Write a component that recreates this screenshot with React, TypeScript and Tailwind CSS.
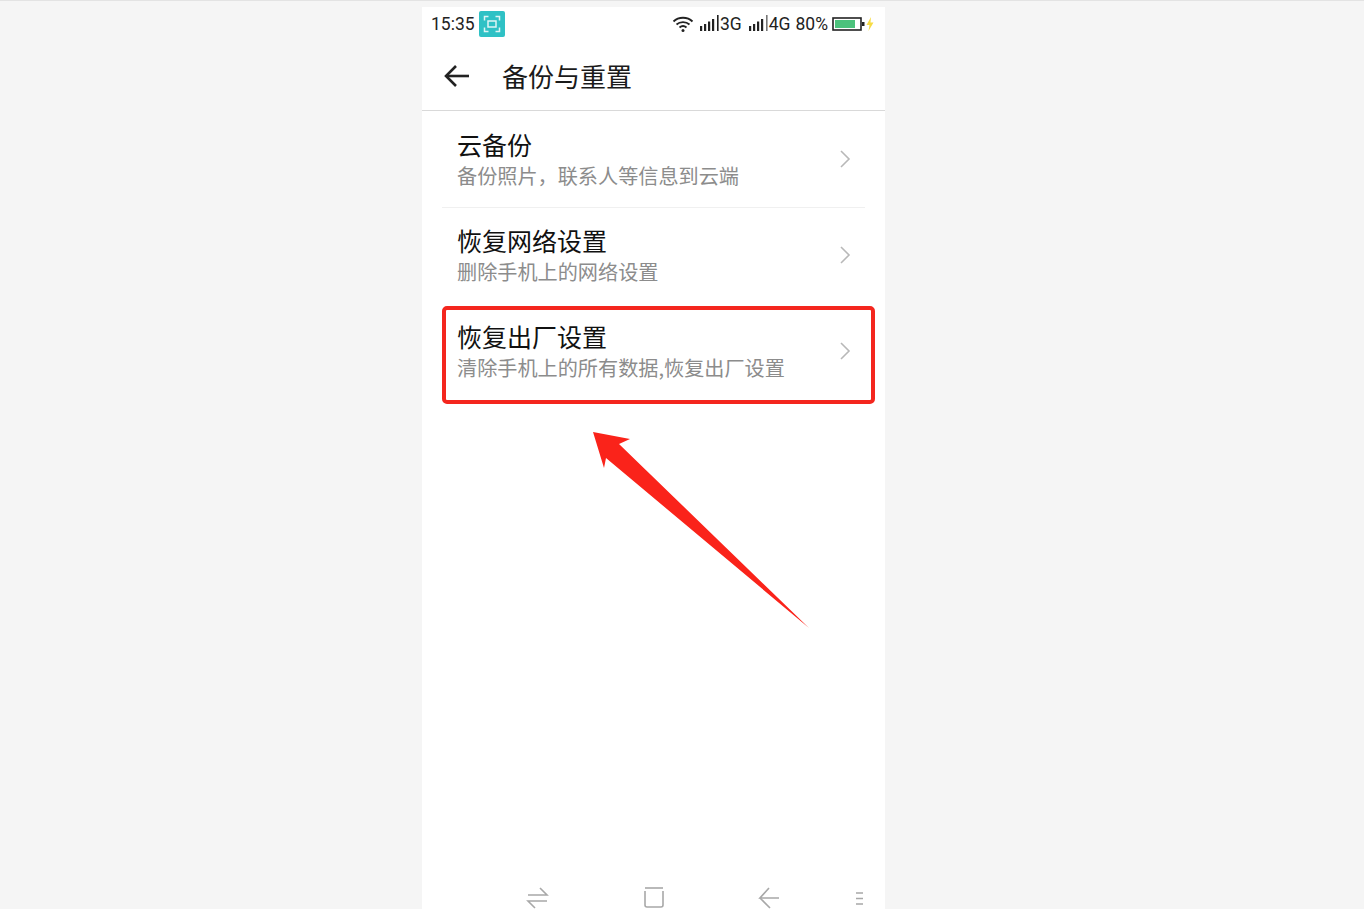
import React from 'react';

const cjk = { fontFamily: '"Noto Sans CJK SC", "Noto Sans", sans-serif' };

interface RowItem {
  title: string;
  desc: string;
  divider?: boolean;
  marked?: boolean;
}

const rows: RowItem[] = [
  { title: '云备份', desc: '备份照片，联系人等信息到云端', divider: true },
  { title: '恢复网络设置', desc: '删除手机上的网络设置' },
  { title: '恢复出厂设置', desc: '清除手机上的所有数据,恢复出厂设置', marked: true },
];

function SignalBars({ lastColor }: { lastColor: string }) {
  return (
    <svg width="20" height="18" viewBox="0 0 20 18" className="shrink-0">
      <rect x="0" y="11" width="2.2" height="5" fill="#222" />
      <rect x="4" y="9" width="2.2" height="7" fill="#222" />
      <rect x="8" y="6.5" width="2.2" height="9.5" fill="#222" />
      <rect x="12" y="4" width="2.2" height="12" fill="#222" />
      <rect x="17" y="0" width="1.6" height="16" fill={lastColor} />
    </svg>
  );
}

function StatusBar() {
  return (
    <div className="flex h-[34px] items-center pl-[9px] pr-[11px]">
      <span className="mt-[2px] w-[44px] text-[17.5px] leading-none text-[#222]" style={{ fontFamily: 'Roboto, sans-serif' }}>15:35</span>
      <div className="ml-[4px] flex h-[26px] w-[26px] items-center justify-center rounded-[2px] bg-[#2fc1c5]">
        <svg width="18" height="18" viewBox="0 0 18 18" fill="none" stroke="#dff5f5" strokeWidth="1.5">
          <path d="M1.5 5.5V1.5H5.5M12.5 1.5H16.5V5.5M16.5 12.5V16.5H12.5M5.5 16.5H1.5V12.5" />
          <rect x="5" y="6" width="8" height="6" />
        </svg>
      </div>
      <div className="ml-auto flex items-center text-[17.5px] leading-none text-[#222]" style={{ fontFamily: 'Roboto, sans-serif' }}>
        <svg width="22" height="18" viewBox="0 0 22 18" fill="none" stroke="#222" strokeWidth="1.8" className="mr-[6px] shrink-0">
          <path d="M1.5 6.5C6.5 1.5 15.5 1.5 20.5 6.5" />
          <path d="M4.5 9.5C8 6.3 14 6.3 17.5 9.5" />
          <path d="M7.5 12.5C9.5 10.8 12.5 10.8 14.5 12.5" />
          <circle cx="11" cy="15.5" r="1.5" fill="#222" stroke="none" />
        </svg>
        <SignalBars lastColor="#222" />
        <span className="mt-[2px]">3G</span>
        <span className="ml-[7px]"><SignalBars lastColor="#777" /></span>
        <span className="mt-[2px]">4G</span>
        <span className="ml-[5px] mt-[2px]">80%</span>
        <svg width="33" height="14" viewBox="0 0 33 14" className="ml-[4px] shrink-0">
          <rect x="1" y="1" width="28" height="12" fill="#fff" stroke="#222" strokeWidth="1.6" />
          <rect x="3" y="3" width="20" height="8" fill="#4cc27c" />
          <rect x="30" y="5" width="2.5" height="4" fill="#222" />
        </svg>
        <svg width="8" height="14" viewBox="0 0 8 14" className="ml-[1px] shrink-0">
          <path d="M5 0L0.5 8H3.5L2.5 14L7.5 5.5H4.5Z" fill="#f7dc45" />
        </svg>
      </div>
    </div>
  );
}

function Row({ item }: { item: RowItem }) {
  return (
    <div className="relative h-[96px] px-[20px]">
      <div className={`flex h-full items-center pl-[15px] pr-[13px] ${item.divider ? 'shadow-[0_1px_0_#f0f0f0]' : ''}`}>
        <div className="flex-1 pt-[2px]">
          <div className="mt-[-4px] text-[25px] leading-[34px] text-[#111]" style={cjk}>{item.title}</div>
          <div className="mt-[1px] text-[20.15px] leading-[28px] text-[#8c8c8c]" style={cjk}>{item.desc}</div>
        </div>
        <svg width="12" height="20" viewBox="0 0 12 20" fill="none" stroke="#b8b8b8" strokeWidth="1.6" className="mr-[1px] shrink-0">
          <path d="M2 2L10 10L2 18" />
        </svg>
      </div>
      {item.marked && (
        <div className="absolute left-[20px] top-[3px] h-[98px] w-[433px] rounded-[5px] border-4 border-[#f4261e]" />
      )}
    </div>
  );
}

function NavBar() {
  return (
    <div className="absolute bottom-0 left-0 h-[30px] w-full">
      <svg width="463" height="30" viewBox="0 0 463 30" fill="none" stroke="#a8a8a8" strokeWidth="1.6">
        <path d="M106 16H125L118 9" />
        <path d="M125 22H106L113 29" />
        <path d="M223 9H241" />
        <path d="M223 12V26Q223 28 225 28H239Q241 28 241 26V12" />
        <path d="M347 9L338 19H357" />
        <path d="M338 19L348 29" />
        <path d="M434 14H441M434 19.5H441M434 25H441" />
      </svg>
    </div>
  );
}

export default function App() {
  return (
    <div className="relative h-[909px] w-full overflow-hidden border-t border-[#e3e3e3] bg-[#f5f5f5] pl-[422px] pt-[6px]">
      <div className="relative h-full w-[463px] bg-white">
        <StatusBar />
        <div className="flex h-[70px] items-center border-b border-[#d9d9d9] pl-[22px]">
          <svg width="26" height="24" viewBox="0 0 26 24" fill="none" stroke="#222" strokeWidth="2.6">
            <path d="M25 12H2" />
            <path d="M12 2L2 12L12 22" />
          </svg>
          <span className="ml-[32px] text-[26px] leading-none text-[#1a1a1a]" style={cjk}>备份与重置</span>
        </div>
        {rows.map((r) => (
          <Row key={r.title} item={r} />
        ))}
        {/* annotation arrow drawn on top of the screenshot */}
        <svg width="463" height="240" viewBox="0 0 463 240" className="absolute left-0 top-[420px]">
          <path d="M171 5L208 12L197 17L387 201L184 31L182 41Z" fill="#fa231a" />
        </svg>
        <NavBar />
      </div>
    </div>
  );
}
